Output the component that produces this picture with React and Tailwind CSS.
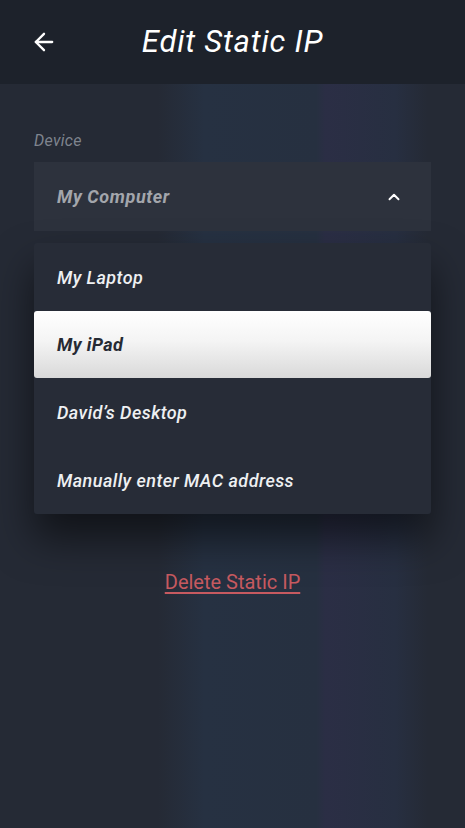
import { ArrowLeft, ChevronUp } from "lucide-react";

const devices = ["My Laptop", "My iPad", "David’s Desktop", "Manually enter MAC address"];

export default function App() {
  const selected = "My iPad";

  return (
    <div
      className="min-h-[828px] w-full flex flex-col bg-[linear-gradient(90deg,#252a35_0%,#252a35_34%,#263142_44%,#263040_68%,#2b2e45_70%,#272f41_85%,#252a35_92%)] text-white"
      style={{ fontFamily: "Roboto, 'Noto Sans', sans-serif" }}
    >
      <header className="h-[84px] bg-[#1d222b] flex items-center px-[30px]">
        <button className="w-[40px] flex items-center text-white">
          <ArrowLeft size={28} strokeWidth={2} />
        </button>
        <h1 className="flex-1 text-center text-[31px] italic font-normal tracking-[0.8px]">
          Edit Static IP
        </h1>
        <div className="w-[40px]" />
      </header>

      <main className="px-[34px] pt-[47px]">
        <label className="block text-[16px] italic text-[#7f848e] leading-[20px] mb-[11px] tracking-[0.3px]">
          Device
        </label>

        <div className="relative">
          <div className="h-[69px] bg-[#2d323d] flex items-center justify-between pl-[23px] pr-[28px]">
            <span className="text-[18px] font-bold italic text-[#a3a6ac] tracking-[0.6px]">My Computer</span>
            <ChevronUp size={18} strokeWidth={2.6} className="text-white" />
          </div>

          <ul className="absolute left-0 right-0 top-[81px] bg-[#272c37] rounded-[3px] shadow-[0_24px_40px_rgba(0,0,0,0.55)] z-10">
            {devices.map((d) =>
              d === selected ? (
                <li
                  key={d}
                  className="h-[67px] flex items-center px-[23px] rounded-[3px] bg-[linear-gradient(180deg,#ffffff_0%,#f4f4f4_45%,#d9d9d9_100%)] text-[18px] font-bold italic text-[#262a33] tracking-[0.4px]"
                >
                  {d}
                </li>
              ) : (
                <li
                  key={d}
                  className="h-[68px] flex items-center px-[23px] text-[18px] italic font-medium text-[#eef0f2] tracking-[0.45px]"
                >
                  {d}
                </li>
              )
            )}
          </ul>
        </div>

        <div className="mt-[338px] flex justify-center">
          <a href="#" className="text-[20px] text-[#c75a60] underline underline-offset-[3px] leading-[26px]">
            Delete Static IP
          </a>
        </div>
      </main>
    </div>
  );
}
